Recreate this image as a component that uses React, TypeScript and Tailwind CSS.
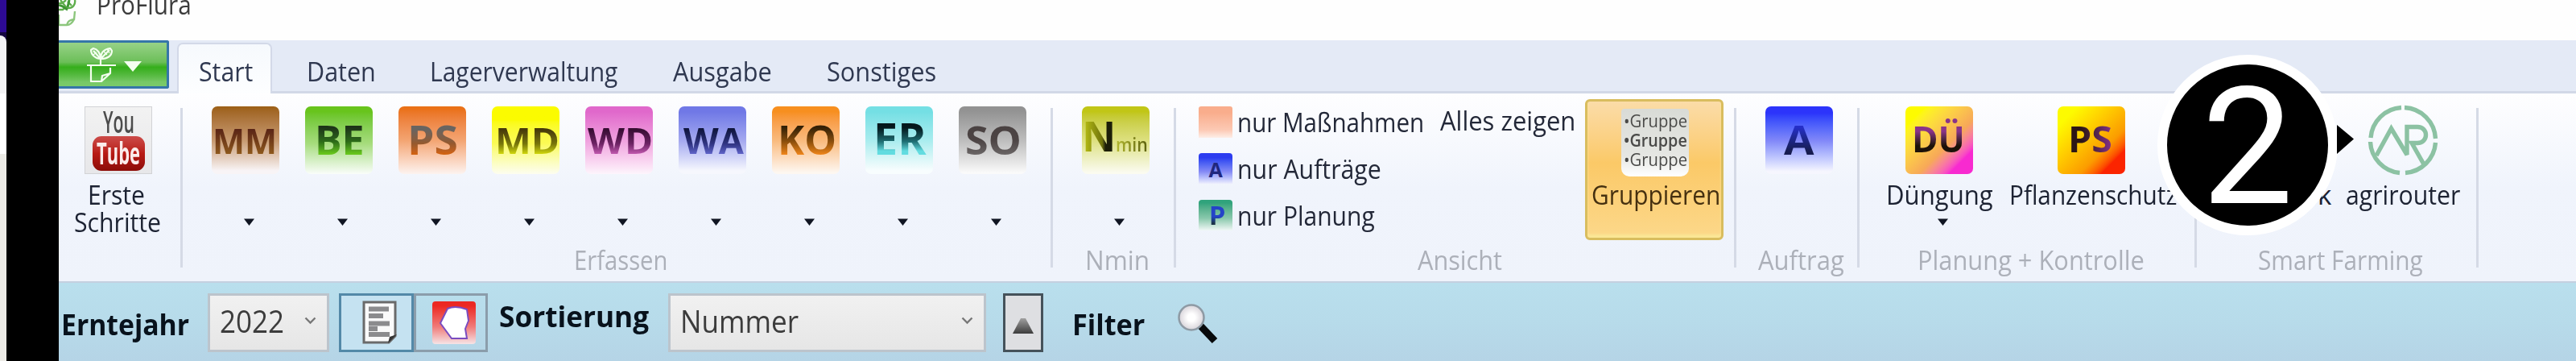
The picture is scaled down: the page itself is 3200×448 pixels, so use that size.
import { ReactNode, useLayoutEffect, useRef, useState } from "react";

/** Text on one line, squeezed or stretched horizontally to the width of its box. */
function Fit({ className = "", inner = "", children }: { className?: string; inner?: string; children: ReactNode }) {
  const box = useRef<HTMLDivElement>(null);
  const text = useRef<HTMLSpanElement>(null);
  const [scale, setScale] = useState(1);
  useLayoutEffect(() => {
    if (box.current && text.current) setScale(box.current.clientWidth / text.current.offsetWidth);
  }, []);
  return (
    <div ref={box} className={`shrink-0 whitespace-nowrap ${className}`}>
      <span ref={text} className={`inline-block origin-left align-top ${inner}`} style={{ transform: `scaleX(${scale})` }}>
        {children}
      </span>
    </div>
  );
}

const label = "h-[34px] translate-x-px translate-y-0.5 text-[33px] leading-[34px]";

function Arrow({ className = "" }: { className?: string }) {
  return (
    <svg className={`h-[9px] w-[13px] shrink-0 ${className}`} viewBox="0 0 13 9">
      <path d="M0 .5h13L6.5 9z" fill="#101522" />
    </svg>
  );
}

function Chevron() {
  return (
    <svg className="h-[10px] w-[15px]" viewBox="0 0 15 10" fill="none" stroke="#777" strokeWidth="2.4">
      <path d="M1.5 1.5l6 6 6-6" />
    </svg>
  );
}

function Separator() {
  return <div className="mt-[18px] h-[198px] w-[3px] shrink-0 bg-[#d5dae6]" />;
}

function Group({ width, title, titleClass, children }: { width: string; title?: string; titleClass?: string; children: ReactNode }) {
  return (
    <section className={`flex shrink-0 flex-col ${width}`}>
      <div className="flex h-[188px] shrink-0 items-start">{children}</div>
      {title && <Fit className={`${label} text-[#acb0b9] ${titleClass}`}>{title}</Fit>}
    </section>
  );
}

function Tile({ bg, pos, ink, text }: { bg: string; pos: string; ink: string; text: string }) {
  return (
    <div className={`flex h-[84px] w-[84px] shrink-0 items-start rounded-[7px] ${bg}`}>
      <Fit className={`translate-y-0.5 font-bold ${pos}`} inner={`bg-clip-text text-transparent ${ink}`}>
        {text}
      </Fit>
    </div>
  );
}

const capture = [
  { text: "MM", bg: "bg-linear-to-b from-[#9c5f14] via-[#c79a70] via-50% to-[#f8f4f6] to-95%", pos: "ml-[1px] w-[80px] mt-[19px] text-[43px] leading-[43px]", ink: "bg-linear-to-b from-[#5b2616] from-20% to-[#8f5a1c] to-90%" },
  { text: "BE", bg: "bg-linear-to-b from-[#68c41c] from-8% via-[#a6dc7c] via-55% to-[#fafdfa] to-100%", pos: "ml-[12px] w-[62px] mt-[14px] text-[50px] leading-[50px]", ink: "bg-linear-to-b from-[#1d3318] from-20% via-[#2c6a18] via-55% to-[#66c41c] to-85%" },
  { text: "PS", bg: "bg-linear-to-b from-[#ea7117] from-4% via-[#f3a471] via-50% to-[#fcf3f0] to-100%", pos: "ml-[11px] w-[63px] mt-[14px] text-[50px] leading-[50px]", ink: "bg-linear-to-b from-[#686460] from-25% via-[#94592e] via-60% to-[#cf6212] to-85%" },
  { text: "MD", bg: "bg-linear-to-b from-[#fbfb00] from-20% via-[#fbfb55] via-55% to-[#fdfdf0] to-100%", pos: "ml-[4px] w-[80px] mt-[18px] text-[44px] leading-[44px]", ink: "bg-linear-to-b from-[#46390a] from-20% via-[#77750a] via-60% to-[#d4dc0a] to-90%" },
  { text: "WD", bg: "bg-linear-to-b from-[#e068cb] from-8% via-[#efa0de] via-50% to-[#fdf5fc] to-100%", pos: "ml-[3px] w-[81px] mt-[18px] text-[44px] leading-[44px]", ink: "bg-linear-to-b from-[#360d32] from-20% via-[#6d2364] via-60% to-[#c55bb2] to-90%" },
  { text: "WA", bg: "bg-linear-to-b from-[#7078e6] from-8% via-[#a4a8ef] via-50% to-[#f6f7fd] to-95%", pos: "ml-[6px] w-[75px] mt-[18px] text-[44px] leading-[44px]", ink: "bg-linear-to-b from-[#10163e] from-20% via-[#303482] via-60% to-[#6266cc] to-90%" },
  { text: "KO", bg: "bg-linear-to-b from-[#f78f1f] from-8% via-[#f9ba7c] via-50% to-[#fdf7f1] to-98%", pos: "ml-[7px] w-[73px] mt-[14px] text-[50px] leading-[50px]", ink: "bg-linear-to-b from-[#332006] from-20% via-[#8a4e0c] via-55% to-[#f0861a] to-88%" },
  { text: "ER", bg: "bg-linear-to-b from-[#74dfe4] from-8% via-[#a8ecee] via-50% to-[#f8fdfe] to-95%", pos: "ml-[10px] w-[66px] mt-[11px] text-[53px] leading-[53px]", ink: "bg-linear-to-b from-[#04181c] from-25% via-[#1f6f74] via-58% to-[#62dce0] to-80%" },
  { text: "SO", bg: "bg-linear-to-b from-[#929292] from-6% via-[#bdbdbd] via-50% to-[#fafafa] to-98%", pos: "ml-[8px] w-[70px] mt-[15px] text-[49px] leading-[49px]", ink: "bg-linear-to-b from-[#4a4242] from-20% via-[#4c4444] to-[#6c6868] to-90%" },
];

function YouTubeTile() {
  return (
    <div className="flex h-[84px] w-[84px] flex-col items-center border border-[#d2d3d6] bg-linear-to-b from-[#f2f2f2] to-[#e7e7e9]">
      <Fit className="h-[35px] w-[39px] text-[37px] leading-[36px] font-semibold text-[#4c4c4c]">You</Fit>
      <div className="mt-[1px] flex h-[43px] w-[65px] justify-center rounded-[11px] bg-linear-to-b from-[#cc4a48] via-[#b81a14] via-50% to-[#8c0c08]">
        <Fit className="mt-[2px] h-[38px] w-[54px] text-[37px] leading-[38px] font-bold text-[#fbeceb]">Tube</Fit>
      </div>
    </div>
  );
}

function Sprout({ className }: { className: string }) {
  return (
    <svg className={className} viewBox="0 0 38 44" fill="none" stroke="currentColor" strokeWidth="2.2" strokeLinejoin="round">
      <path d="M1 23h36M18 23V13M6 23v20h13l11-10M19 43l1-7 10-3V26" />
      <path d="M18 15C12 15 6 10 6 4l3-2c5 1 9 6 9 13zM18 15c0-7 4-12 12-13l2 3c0 6-5 10-14 10zM9 5l9 10 11-11" />
      <path d="M22 6l4 4M26 3l3 5M9 10l4-3" strokeWidth="1.2" />
    </svg>
  );
}

function ModeRow({ icon, text, width }: { icon: ReactNode; text: string; width: string }) {
  return (
    <div className="flex h-[58px] items-start">
      {icon}
      <Fit className={`${label} mt-[1px] ml-[5px] text-[#232838] ${width}`}>{text}</Fit>
    </div>
  );
}

function TitleBar() {
  return (
    <header className="flex h-[50px] items-start overflow-hidden bg-[#fefefe]">
      <svg className="h-[34px] w-[26px] shrink-0" viewBox="0 0 26 34" fill="none" stroke="#5fae4c" strokeWidth="2.4">
        <path d="M0 4c5 1 8-3 9-4M2 0l8 10c8 1 11-5 10-10M11 2l5 5M0 12h5l3-3" />
        <path d="M0 7c4-2 6 3 11 5M13 0l-2 9" stroke="#3f9633" strokeWidth="3" />
        <path d="M0 18v13h10c1-5 4-6 9-7l1-10M10 31c4 0 7-3 9-7" stroke="#8cc67c" />
      </svg>
      <Fit className={`${label} -mt-[13px] ml-[20px] w-[118px] text-[#3c3c3c]`}>ProFlura</Fit>
    </header>
  );
}

function TabBar() {
  return (
    <nav className="flex h-[66px] items-start border-b-[3px] border-[#d2d8e7] bg-[#e4eaf6] text-[#2f3850]">
      <div className="flex h-[60px] w-[137px] shrink-0 items-start rounded-r-[3px] border-[3px] border-l-0 border-[#3576a8] bg-linear-to-b from-[#97d287] via-[#68bd54] via-48% to-[#7acb6a]">
        <div className="flex h-full w-full items-start bg-linear-to-b from-transparent from-45% via-[#35ae1b] via-56% to-transparent to-90% text-[#f4fff0]">
          <Sprout className="mt-[5px] ml-[34px] h-[44px] w-[38px]" />
          <svg className="mt-[23px] ml-[9px] h-[13px] w-[22px]" viewBox="0 0 22 13">
            <path d="M0 0h22L11 13z" fill="currentColor" />
          </svg>
        </div>
      </div>
      <div className="mt-[3px] ml-[10px] flex h-[63px] w-[118px] shrink-0 items-start rounded-t-[7px] border-2 border-b-0 border-[#d3d9e8] bg-linear-to-b from-[#f6f9fd] to-[#fdfeff]">
        <Fit className={`${label} mt-[15px] ml-[24px] w-[67px]`}>Start</Fit>
      </div>
      <Fit className={`${label} mt-[20px] ml-[42px] w-[86px]`}>Daten</Fit>
      <Fit className={`${label} mt-[20px] ml-[67px] w-[233px]`}>Lagerverwaltung</Fit>
      <Fit className={`${label} mt-[20px] ml-[69px] w-[123px]`}>Ausgabe</Fit>
      <Fit className={`${label} mt-[20px] ml-[68px] w-[136px]`}>Sonstiges</Fit>
    </nav>
  );
}

function Ribbon() {
  return (
    <div className="flex h-[235px] items-start border-b-2 border-[#c4d0e0] bg-linear-to-b from-[#fefeff] via-[#f0f4fc] via-50% to-[#eff3fb] text-[#1c2232]">
      <Group width="w-[151px]">
        <div className="mt-[16px] flex w-full flex-col">
          <div className="ml-[32px]">
            <YouTubeTile />
          </div>
          <Fit className={`${label} mt-[7px] ml-[35px] w-[71px]`}>Erste</Fit>
          <Fit className={`${label} ml-[18px] w-[108px]`}>Schritte</Fit>
        </div>
      </Group>
      <Separator />
      <Group width="w-[1078px]" title="Erfassen" titleClass="ml-[485px] w-[116px]">
        <div className="mt-[16px] ml-[36px] flex gap-8">
          {capture.map((c) => (
            <div key={c.text} className="flex flex-col">
              <Tile {...c} />
              <Arrow className="mt-[55px] ml-[40px]" />
            </div>
          ))}
        </div>
      </Group>
      <Separator />
      <Group width="w-[150px]" title="Nmin" titleClass="ml-[39px] w-[80px]">
        <div className="mt-[16px] ml-[36px] flex flex-col">
          <div className="flex h-[84px] w-[84px] items-start rounded-[7px] bg-linear-to-b from-[#c1c616] from-8% via-[#dde07e] via-50% to-[#fbfbf0] to-98%">
            <Fit className="mt-[10px] w-[42px] text-[52px] leading-[52px] font-bold" inner="bg-linear-to-r from-[#b2b814] from-10% via-[#70740c] via-60% to-[#1c1e08] to-70% bg-clip-text text-transparent">N</Fit>
            <Fit className="mt-[35px] w-[40px] text-[24px] leading-[24px] font-semibold" inner="bg-linear-to-r from-[#b4b930] to-[#5c600e] bg-clip-text text-transparent">min</Fit>
          </div>
          <Arrow className="mt-[55px] ml-[40px]" />
        </div>
      </Group>
      <Separator />
      <Group width="w-[693px]" title="Ansicht" titleClass="ml-[299px] w-[105px]">
        <div className="mt-[16px] ml-[28px] flex w-[280px] shrink-0 flex-col">
          <ModeRow
            text="nur Maßnahmen"
            width="w-[232px]"
            icon={<div className="h-[39px] w-[42px] shrink-0 rounded-t-[3px] bg-linear-to-b from-[#f9ad8c] from-20% via-[#fcc9b4] via-75% to-[#fdeee8]" />}
          />
          <ModeRow
            text="nur Aufträge"
            width="w-[179px]"
            icon={
              <div className="flex h-[38px] w-[42px] shrink-0 justify-center rounded-t-[4px] bg-linear-to-b from-[#2c3cf0] from-15% via-[#8489f5] via-60% to-[#eeeefd]">
                <span className="mt-[7px] text-[25px] leading-[26px] font-bold text-[#20277e]">A</span>
              </div>
            }
          />
          <ModeRow
            text="nur Planung"
            width="w-[171px]"
            icon={
              <div className="flex h-[38px] w-[42px] shrink-0 justify-center rounded-t-[4px] bg-linear-to-b from-[#30a37c] from-10% via-[#88c8ac] via-60% to-[#f0f7f6]">
                <span className="mt-[2px] ml-[4px] h-[34px] bg-linear-to-b from-[#2444c8] from-55% to-[#1c3348] to-80% bg-clip-text text-[33px] leading-[34px] font-bold text-transparent">P</span>
              </div>
            }
          />
        </div>
        <Fit className={`${label} mt-[15px] ml-[19px] w-[168px] text-[#232838]`}>Alles zeigen</Fit>
        <div className="mt-[7px] ml-[13px] flex h-[175px] w-[172px] shrink-0 flex-col rounded-[6px] border-[3px] border-[#d9bd5e] bg-linear-to-b from-[#fbdca8] via-[#fbc967] via-45% to-[#fcd88a] text-[#453010] shadow-[inset_0_-4px_3px_#fbe796]">
          <div className="mt-[9px] ml-[42px] flex h-[84px] w-[84px] flex-col rounded-t-[4px] rounded-b-[10px] bg-linear-to-b from-[#d9dbd6] via-[#e6e7e3] via-70% to-white pt-[3px] text-[#4a4a48]">
            <Fit className="ml-[3px] h-[24px] w-[79px] text-[22px] leading-[23px] font-medium">•Gruppe</Fit>
            <Fit className="ml-[3px] h-[24px] w-[79px] text-[22px] leading-[23px] font-semibold">•Gruppe</Fit>
            <Fit className="ml-[3px] h-[24px] w-[79px] text-[22px] leading-[23px] font-medium">•Gruppe</Fit>
          </div>
          <Fit className={`${label} mt-[4px] ml-[4px] w-[160px]`}>Gruppieren</Fit>
        </div>
      </Group>
      <Separator />
      <Group width="w-[150px]" title="Auftrag" titleClass="ml-[26px] w-[107px]">
        <div className="mt-[16px] ml-[36px]">
          <Tile
            text="A"
            bg="bg-linear-to-b from-[#2c34fb] from-10% via-[#8086f8] via-50% to-[#f6f6fe] to-96%"
            pos="ml-[23px] w-[38px] mt-[14px] text-[50px] leading-[50px]"
            ink="bg-linear-to-b from-[#252ec8] from-20% to-[#171c50] to-80%"
          />
        </div>
      </Group>
      <Separator />
      <Group width="w-[416px]" title="Planung + Kontrolle" titleClass="ml-[71px] w-[282px]">
        <div className="mt-[16px] ml-[32px] flex w-[135px] shrink-0 flex-col">
          <div className="ml-[25px]">
            <Tile
              text="DÜ"
              bg="bg-linear-to-br from-[#fdfb00] from-15% via-[#f7a858] via-60% to-[#f82ad0] to-82%"
              pos="ml-[8px] w-[66px] mt-[8px] text-[44px] leading-[60px]"
              ink="bg-linear-to-b from-[#8a3488] from-35% to-[#1c1208] to-65%"
            />
          </div>
          <Fit className={`${label} mt-[7px] w-[133px]`}>Düngung</Fit>
          <Arrow className="mt-[14px] ml-[65px]" />
        </div>
        <div className="mt-[16px] ml-[18px] flex w-[216px] shrink-0 flex-col">
          <div className="ml-[61px]">
            <Tile
              text="PS"
              bg="bg-linear-to-br from-[#fdfb00] from-15% via-[#fb9c00] via-66% to-[#fb2400] to-82%"
              pos="ml-[13px] w-[55px] mt-[16px] text-[44px] leading-[44px]"
              ink="bg-linear-to-r from-[#2c1616] from-30% to-[#85308c]"
            />
          </div>
          <Fit className={`${label} mt-[7px] w-[208px]`}>Pflanzenschutz</Fit>
        </div>
      </Group>
      <Separator />
      <Group width="w-[347px]" title="Smart Farming" titleClass="ml-[75px] w-[205px]">
        <Fit className={`${label} mt-[107px] ml-[149px] w-[17px]`}>k</Fit>
        <div className="mt-[14px] ml-[18px] flex w-[144px] shrink-0 flex-col">
          <svg className="ml-[28px] h-[88px] w-[88px]" viewBox="0 0 88 88" fill="none" stroke="#8cc2a3" strokeWidth="5.4">
            <path d="M46 3.5A40.5 40.5 0 0 1 84.5 42M84.5 47A40.5 40.5 0 0 1 47 84.5M40 84.5A40.5 40.5 0 0 1 3.5 46M4 41A40.5 40.5 0 0 1 42 3.5" />
            <path d="M11 63L29.5 29.5 49 62V27.5h13c14 0 14 20 0 20h-7L70 74" strokeLinejoin="miter" strokeMiterlimit="3" />
          </svg>
          <Fit className={`${label} mt-[5px] w-[142px]`}>agrirouter</Fit>
        </div>
      </Group>
      <Separator />
    </div>
  );
}

function FilterBar() {
  const combo = "flex h-[73px] shrink-0 items-start border-[3px] border-[#bcc4cc] bg-linear-to-b from-[#f1f1f1] to-[#e6e6e6] text-[#3c3c3c]";
  const heading = "shrink-0 translate-y-0.5 text-[35px] leading-[36px] font-bold";
  return (
    <div className="flex h-[97px] items-start bg-linear-to-b from-[#b9dfed] via-[#b7dbea] via-50% to-[#b5d4e6] pt-[13px] text-[#08121c]">
      <Fit className={`${heading} mt-[19px] ml-[3px] w-[159px]`}>Erntejahr</Fit>
      <div className={`${combo} ml-[23px] w-[151px]`}>
        <Fit className="mt-[12px] ml-[12px] w-[80px] text-[38px] leading-[38px]">2022</Fit>
        <div className="mt-[26px] ml-[25px]">
          <Chevron />
        </div>
      </div>
      <div className="ml-[12px] flex h-[73px] w-[93px] shrink-0 items-start border-[3px] border-[#5389a8] bg-[#c5e2f1] pt-[6px] pl-[26px]">
        <svg className="h-[54px] w-[44px]" viewBox="0 0 44 54">
          <path d="M2 2h39v42l-8 8H2z" fill="#fafafa" stroke="#6a6a6a" strokeWidth="3" />
          <path d="M32 53l2-8 9-3z" fill="#333" />
          <path d="M8 10.500h25M8 19h18M8 28.500h26M8 35h11M8 42h26" stroke="#8b8b8d" strokeWidth="6" />
        </svg>
      </div>
      <div className="flex h-[73px] w-[92px] shrink-0 items-start border-[3px] border-[#8b9dab] pt-[7px] pl-[20px]">
        <svg className="h-[53px] w-[54px]" viewBox="0 0 54 53">
          <defs>
            <linearGradient id="field" x1="0" y1="0" x2="0" y2="1">
              <stop offset="0.1" stopColor="#ec2822" />
              <stop offset="0.6" stopColor="#f07c7a" />
              <stop offset="1" stopColor="#f6e4e6" />
            </linearGradient>
          </defs>
          <rect width="54" height="53" rx="4" fill="url(#field)" />
          <path d="M19 9c7-3 16-2 24 1l2 14-4 10 2 12H24L10 27z" fill="#fff" stroke="#7a4cc0" strokeWidth="2" />
        </svg>
      </div>
      <Fit className={`${heading} mt-[9px] ml-[14px] w-[186px]`}>Sortierung</Fit>
      <div className={`${combo} ml-[24px] w-[395px]`}>
        <Fit className="mt-[12px] ml-[12px] w-[147px] text-[38px] leading-[38px]">Nummer</Fit>
        <div className="mt-[26px] ml-[202px]">
          <Chevron />
        </div>
      </div>
      <div className="ml-[21px] flex h-[73px] w-[50px] shrink-0 items-start justify-center border-[3px] border-[#45525a] bg-[#dedfe2] pt-[28px]">
        <svg className="h-[19px] w-[26px]" viewBox="0 0 26 19">
          <defs>
            <linearGradient id="sort" x1="0" y1="0" x2="0" y2="1">
              <stop offset="0" stopColor="#a0a0a0" />
              <stop offset="1" stopColor="#3c3c3c" />
            </linearGradient>
          </defs>
          <path d="M10 0h6l10 19H0z" fill="url(#sort)" />
        </svg>
      </div>
      <Fit className={`${heading} mt-[19px] ml-[36px] w-[90px]`}>Filter</Fit>
      <svg className="mt-[12px] ml-[40px] h-[52px] w-[52px]" viewBox="0 0 52 52">
        <defs>
          <radialGradient id="lens">
            <stop offset="0.3" stopColor="#fff" />
            <stop offset="1" stopColor="#d8d4da" />
          </radialGradient>
        </defs>
        <path d="M29 28l18 19" stroke="#080a0c" strokeWidth="9" />
        <circle cx="18" cy="18" r="15.500" fill="url(#lens)" stroke="#8e9aa4" strokeWidth="2.500" />
      </svg>
    </div>
  );
}

export default function App() {
  return (
    <div className="relative flex h-[448px] w-[3200px] overflow-hidden bg-black font-['Open_Sans','Noto_Sans',sans-serif]">
      <aside className="flex w-[8px] shrink-0 flex-col bg-[#2d0a94]">
        <div className="h-[40px]" />
        <div className="flex flex-1 flex-col bg-[#150640] pt-[4px]">
          <div className="h-[72px] rounded-tr-[8px] bg-[#f3f3f4]" />
          <div className="h-[75px] bg-white" />
          <div className="flex-1 bg-[#ecebe6]" />
        </div>
      </aside>
      <main className="ml-[65px] flex min-w-0 flex-1 flex-col">
        <TitleBar />
        <TabBar />
        <Ribbon />
        <FilterBar />
      </main>
      <div className="absolute top-[68px] left-[2680px] flex h-[224px] w-[224px] items-center justify-center rounded-full border-[12px] border-white bg-black">
        <span className="translate-y-[3px] font-[Roboto,sans-serif] text-[202px] leading-[200px] text-white">2</span>
      </div>
      <svg className="absolute top-[155px] left-[2903px] h-[36px] w-[21px]" viewBox="0 0 21 36">
        <path d="M0 0l21 17.500L0 36z" />
      </svg>
    </div>
  );
}
